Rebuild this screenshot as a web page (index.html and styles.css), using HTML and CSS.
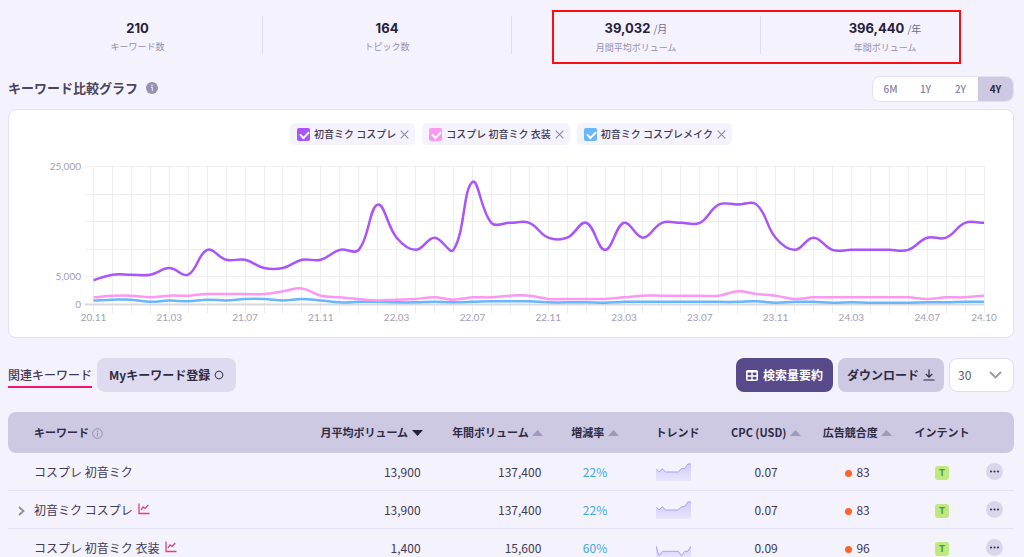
FILE: index.html
```html
<!DOCTYPE html>
<html lang="ja">
<head>
<meta charset="utf-8">
<meta name="viewport" content="width=device-width, initial-scale=1">
<title>キーワード比較グラフ</title>
<link rel="stylesheet" href="styles.css">
</head>
<body>
<svg class="sprite" aria-hidden="true">
  <symbol id="i-close" viewBox="0 0 10 10"><path d="M.8.8l8.400 8.400M9.200.8L.8 9.200" fill="none" stroke="#8f8aa8" stroke-width="1.200"/></symbol>
  <symbol id="i-trend" viewBox="0 0 12 12"><path d="M1 .5V10.500H11.500" fill="none" stroke="#e5407c" stroke-width="1.300"/><path d="M3 6.800L5 4l2 1.500L10.300 2" fill="none" stroke="#e5407c" stroke-width="1.300"/></symbol>
  <symbol id="i-more" viewBox="0 0 17 17"><circle cx="5" cy="8.500" r="1.100"/><circle cx="8.500" cy="8.500" r="1.100"/><circle cx="12" cy="8.500" r="1.100"/></symbol>
  <symbol id="i-up" viewBox="0 0 11 6"><path d="M5.500 0L11 6H0z"/></symbol>
  <symbol id="i-down" viewBox="0 0 11 6"><path d="M0 0h11L5.500 6z"/></symbol>
  <symbol id="spark-a" viewBox="0 0 35 18"><path d="M0 5.700L3.200 9 6.400 5.700 9.500 9H22.300L25.500 5.700H28.600L31.800 1H35V18H0z" fill="url(#fade)"/><path d="M0 5.700L3.200 9 6.400 5.700 9.500 9H22.300L25.500 5.700H28.600L31.800 1H35" fill="none" stroke="#aaa0fb"/></symbol>
  <symbol id="spark-b" viewBox="0 0 35 18"><path d="M0 7L3.200 17 6.400 12.300H22.300L25.500 17 28.600 12.300H31.800L35 7V18H0z" fill="url(#fade)"/><path d="M0 7L3.200 17 6.400 12.300H22.300L25.500 17 28.600 12.300H31.800L35 7" fill="none" stroke="#aaa0fb"/></symbol>
  <defs><linearGradient id="fade" x1="0" y1="0" x2="0" y2="1"><stop offset="0" stop-color="#d1cbfb"/><stop offset="1" stop-color="#e8e5fc"/></linearGradient></defs>
</svg>
<main class="page">
  <section class="stats">
    <div class="stat"><p class="stat-value">210</p><p class="stat-label">キーワード数</p></div>
    <div class="stat"><p class="stat-value">164</p><p class="stat-label">トピック数</p></div>
    <div class="stat"><p class="stat-value">39,032 <span class="unit">/月</span></p><p class="stat-label">月間平均ボリューム</p></div>
    <div class="stat"><p class="stat-value">396,440 <span class="unit">/年</span></p><p class="stat-label">年間ボリューム</p></div>
    <div class="highlight"></div>
  </section>

  <header class="section-head">
    <h1 class="title">キーワード比較グラフ
      <svg class="info" viewBox="0 0 12 12"><circle cx="6" cy="6" r="6" fill="#9792b0"/><path d="M5 5.400H6.300V8.800" fill="none" stroke="#f4f2fc"/><circle cx="6" cy="3.400" r=".8" fill="#f4f2fc"/></svg>
    </h1>
    <div class="range" role="group" aria-label="期間">
      <button type="button">6M</button><button type="button">1Y</button><button type="button">2Y</button><button type="button" class="active" aria-pressed="true">4Y</button>
    </div>
  </header>

  <section class="card">
    <div class="chips">
      <div class="chip"><label><input class="check violet" type="checkbox" checked>初音ミク コスプレ</label><button type="button" aria-label="削除"><svg><use href="#i-close"/></svg></button></div>
      <div class="chip"><label><input class="check pink" type="checkbox" checked>コスプレ 初音ミク 衣装</label><button type="button" aria-label="削除"><svg><use href="#i-close"/></svg></button></div>
      <div class="chip"><label><input class="check blue" type="checkbox" checked>初音ミク コスプレメイク</label><button type="button" aria-label="削除"><svg><use href="#i-close"/></svg></button></div>
    </div>
    <svg class="chart" id="chart" viewBox="0 0 1004 176" role="img" aria-label="検索ボリュームの推移"></svg>
  </section>

  <div class="toolbar">
    <a class="tab" href="#keywords">関連キーワード</a>
    <button type="button" class="btn soft">Myキーワード登録
      <svg class="ring" viewBox="0 0 10 10"><path d="M5 1L7.800 2.200 9 5 7.800 7.800 5 9 2.200 7.800 1 5 2.200 2.200z" fill="none" stroke="currentColor"/></svg>
    </button>
    <div class="actions">
      <button type="button" class="btn primary">
        <svg class="grid-icon" viewBox="0 0 12 11"><rect x=".8" y=".8" width="10.400" height="9.400" rx="1" fill="none" stroke="currentColor" stroke-width="1.600"/><path d="M1 1.800H11M1 6H11M6 2.500V10" stroke="currentColor" stroke-width="1.400"/></svg>
        検索量要約</button>
      <button type="button" class="btn muted">ダウンロード
        <svg class="down-icon" viewBox="0 0 12 12"><path d="M6 .5V8M2.800 5L6 8.200 9.200 5M.5 11H11.500" fill="none" stroke="currentColor" stroke-width="1.200"/></svg>
      </button>
      <div class="select">
        <select aria-label="表示件数"><option>30</option><option>50</option><option>100</option></select>
        <svg viewBox="0 0 13 8"><path d="M1 1l5.500 5.500L12 1" fill="none" stroke="#9a94b5" stroke-width="1.800"/></svg>
      </div>
    </div>
  </div>

  <table class="table" id="keywords">
    <colgroup><col><col class="w-month"><col class="w-year"><col class="w-rate"><col class="w-trend"><col class="w-cpc"><col class="w-comp"><col class="w-intent"><col class="w-menu"></colgroup>
    <thead>
      <tr>
        <th class="left">キーワード <svg class="info-line" viewBox="0 0 12 12"><circle cx="6" cy="6" r="5.300" fill="none" stroke="#8f8aa8"/><path d="M6 5.200V9" stroke="#8f8aa8"/><circle cx="6" cy="3.500" r=".7" fill="#8f8aa8"/></svg></th>
        <th class="right">月平均ボリューム <svg class="sort on"><use href="#i-down"/></svg></th>
        <th class="right">年間ボリューム <svg class="sort"><use href="#i-up"/></svg></th>
        <th>増減率 <svg class="sort"><use href="#i-up"/></svg></th>
        <th>トレンド</th>
        <th>CPC (USD) <svg class="sort"><use href="#i-up"/></svg></th>
        <th>広告競合度 <svg class="sort"><use href="#i-up"/></svg></th>
        <th>インテント</th>
        <th></th>
      </tr>
    </thead>
    <tbody>
      <tr>
        <td class="left">コスプレ 初音ミク</td><td class="right">13,900</td><td class="right">137,400</td><td class="rate">22%</td>
        <td class="trend"><svg class="spark"><use href="#spark-a"/></svg></td><td>0.07</td><td><span class="dot"></span>83</td><td><span class="intent">T</span></td>
        <td class="menu"><button type="button" aria-label="メニュー"><svg><use href="#i-more"/></svg></button></td>
      </tr>
      <tr>
        <td class="left parent"><button type="button" class="expand" aria-label="展開"><svg viewBox="0 0 7 10"><path d="M1 1l4.500 4L1 9" fill="none" stroke="#8f8aa8" stroke-width="1.800"/></svg></button>初音ミク コスプレ <svg class="mark"><use href="#i-trend"/></svg></td><td class="right">13,900</td><td class="right">137,400</td><td class="rate">22%</td>
        <td class="trend"><svg class="spark"><use href="#spark-a"/></svg></td><td>0.07</td><td><span class="dot"></span>83</td><td><span class="intent">T</span></td>
        <td class="menu"><button type="button" aria-label="メニュー"><svg><use href="#i-more"/></svg></button></td>
      </tr>
      <tr>
        <td class="left">コスプレ 初音ミク 衣装 <svg class="mark"><use href="#i-trend"/></svg></td><td class="right">1,400</td><td class="right">15,600</td><td class="rate">60%</td>
        <td class="trend"><svg class="spark"><use href="#spark-b"/></svg></td><td>0.09</td><td><span class="dot"></span>96</td><td><span class="intent">T</span></td>
        <td class="menu"><button type="button" aria-label="メニュー"><svg><use href="#i-more"/></svg></button></td>
      </tr>
    </tbody>
  </table>
</main>
<script src="chart.js"></script>
</body>
</html>
```
FILE: styles.css
```css
* { box-sizing: border-box; }
body {
  margin: 0;
  background: #f4f2fc;
  color: #3f3a55;
  font-family: "Noto Sans CJK JP", sans-serif;
  font-size: 12px;
  line-height: 18px;
}
button, select, input { font: inherit; color: inherit; margin: 0; }
button { border: 0; padding: 0; background: none; cursor: pointer; }
p, h1 { margin: 0; }
svg { flex: none; }
.sprite { position: absolute; width: 0; height: 0; }
.page { padding: 16px 10px 0 8px; }

.stats {
  position: relative;
  display: grid;
  grid-template-columns: repeat(4, 1fr);
  padding: 0 5px;
}
.stat { height: 38px; text-align: center; }
.stat + .stat { border-left: 1px solid #dfdcf2; }
.stat-value {
  font-family: Inter, "Noto Sans CJK JP", sans-serif;
  font-size: 13px;
  font-weight: 700;
  line-height: 24px;
  color: #25213a;
}
.unit { font-family: "Noto Sans CJK JP", sans-serif; font-size: 10px; font-weight: 400; color: #6f6a86; }
.stat-label { font-size: 9px; line-height: 14px; color: #9590ad; }
.highlight {
  position: absolute;
  top: -6px;
  bottom: -10px;
  left: 54.1%;
  right: 5.3%;
  border: 2px solid #fb0d12;
}

.section-head { display: flex; justify-content: space-between; align-items: center; margin: 22px 0 7px; }
.title { display: flex; align-items: center; gap: 8px; height: 26px; padding-bottom: 2px; font-size: 13px; font-weight: 700; color: #4a4560; }
.info { width: 12px; height: 12px; }
.range { display: flex; overflow: hidden; border: 1px solid #e4e1f4; border-radius: 8px; background: #fff; }
.range button { width: 35px; height: 24px; font-size: 10px; font-weight: 500; color: #8580a0; }
.range .active { background: #cdc9e2; color: #2c2842; font-weight: 700; }

.card { padding: 13px 0 6px; border: 1px solid #e4e1f6; border-radius: 8px; background: #fff; }
.chips { display: flex; justify-content: center; gap: 7px; margin-bottom: 10px; }
.chip { display: flex; align-items: center; gap: 4px; height: 22px; padding: 0 6px 0 7px; border-radius: 5px; background: #f4f2fc; }
.chip label { display: flex; align-items: center; gap: 4px; font-size: 10px; font-weight: 500; color: #3f3a55; }
.chip button, .chip button svg { display: block; width: 9px; height: 9px; }
.check { position: relative; appearance: none; width: 13px; height: 13px; border-radius: 2px; }
.check::after {
  content: "";
  position: absolute;
  left: 3px;
  top: 3px;
  width: 7px;
  height: 4px;
  border: solid #fff;
  border-width: 0 0 2px 2px;
  transform: rotate(-45deg);
}
.violet { background: #a955fb; }
.pink { background: #fc97f2; }
.blue { background: #68b6fc; }

.chart { display: block; width: 100%; height: auto; }
.chart text { font-family: Lato, sans-serif; font-size: 10px; fill: #a29db9; }
.chart .grid { stroke: #eeedf2; fill: none; }
.chart .base { stroke: #d9d8dd; stroke-width: 2; }
.chart .line { fill: none; stroke-width: 2.5px; }
.line-violet { stroke: #a955fb; }
.line-pink { stroke: #fc97f2; }
.line-blue { stroke: #68b6fc; }

.toolbar { display: flex; align-items: center; margin: 20px 0; }
.tab { margin-right: 5px; padding: 4px 0 2px; border-bottom: 2px solid #ee1a66; font-weight: 500; color: #3f3a55; text-decoration: none; }
.btn { display: flex; align-items: center; gap: 4px; height: 34px; border-radius: 8px; font-weight: 700; color: #2f2b45; white-space: nowrap; }
.soft { padding: 0 12px; background: #dedbf1; }
.primary { padding: 0 10px; background: #574a8a; color: #fff; gap: 5px; }
.muted { padding: 0 9px; background: #cdc9e2; }
.ring { width: 10px; height: 10px; }
.grid-icon { width: 12px; height: 11px; }
.down-icon { width: 12px; height: 12px; }
.actions { display: flex; gap: 5px; margin-left: auto; }
.select { position: relative; width: 65px; }
.select select { appearance: none; width: 100%; height: 34px; padding: 0 8px; border: 1px solid #dfdcf2; border-radius: 8px; background: #fff; color: #5e5975; }
.select svg { position: absolute; right: 12px; top: 13px; width: 13px; height: 8px; pointer-events: none; }

.table { width: 100%; table-layout: fixed; border-collapse: separate; border-spacing: 0; }
.w-month { width: 13.1%; }
.w-year { width: 12%; }
.w-rate { width: 8.5%; }
.w-trend { width: 7.9%; }
.w-cpc { width: 9.7%; }
.w-comp { width: 8.5%; }
.w-intent { width: 8.3%; }
.w-menu { width: 3%; }
.table th { height: 41px; padding: 0 0 2px; background: #cdc9e2; font-size: 11px; font-weight: 700; color: #2f2b45; white-space: nowrap; }
.table th:first-child { border-radius: 8px 0 0 8px; }
.table th:last-child { border-radius: 0 8px 8px 0; }
.table td { height: 38px; padding: 0; border-bottom: 1px solid #e6e3f6; text-align: center; white-space: nowrap; }
.table .left { padding-left: 26px; text-align: left; }
.table .right { text-align: right; }
.table th.right { padding-right: 9px; }
.table td.right { padding-right: 11px; }
.table .rate { color: #46a9e4; }
.table .trend { padding-left: 18px; text-align: left; }
.table .parent { padding-left: 9px; }
.table .menu { padding-left: 2px; text-align: left; }
.info-line { width: 11px; height: 11px; vertical-align: -2px; }
.sort { width: 11px; height: 6px; margin-left: 1px; vertical-align: 1px; fill: #9f9ab8; }
.sort.on { fill: #25213a; }
.spark { display: block; width: 35px; height: 18px; }
.mark { width: 12px; height: 12px; margin-left: 3px; vertical-align: 0; }
.expand { width: 17px; text-align: left; }
.expand svg { display: block; width: 7px; height: 10px; margin-left: 1px; }
.parent .expand { vertical-align: -1px; }
.dot { display: inline-block; width: 7px; height: 7px; margin-right: 4px; border-radius: 50%; background: #ff622c; }
.intent { display: inline-block; width: 14px; height: 14px; border-radius: 3px; background: #bfe97e; color: #3a9d3c; font-family: Inter, sans-serif; font-size: 9px; font-weight: 700; line-height: 14px; vertical-align: middle; }
.menu button { display: block; width: 17px; height: 17px; border-radius: 50%; background: #d9d6eb; }
.menu svg { display: block; width: 17px; height: 17px; fill: #3f3a55; }
```
FILE: chart.js
```js
const svg = document.getElementById("chart");
const left = 84.5, right = 975, top0 = 11.5, bottom = 149.5, max = 25000;
const series = {
  blue: [720,880,880,480,720,590,880,720,1000,1000,720,1000,720,390,480,480,390,390,480,390,480,590,590,590,390,390,390,320,480,480,480,480,480,480,480,590,320,480,480,320,390,320,320,320,390,390,480,480],
  pink: [1300,1600,1600,1300,1600,1600,1900,1900,1900,1900,2400,2900,1600,1300,1000,720,880,1000,1300,880,1300,1300,1600,1600,1000,1000,1000,1000,1300,1600,1600,1600,1600,1600,2400,1900,1600,1000,1300,1300,1300,1300,1300,1300,1000,1300,1300,1600],
  violet: [4400,5400,5400,5400,6600,5400,9900,8100,8100,6600,6600,8100,8100,9900,9900,18100,12100,9900,12100,9900,22200,14800,14800,14800,12100,12100,14800,9900,14800,12100,14800,14800,14800,18100,18100,18100,12100,9900,12100,9900,9900,9900,9900,9900,12100,12100,14800,14800]
};
const count = series.violet.length;
const px = i => left + (right - left) * i / (count - 1);
const py = v => bottom - (bottom - top0) * v / max;

function add(name, attrs, text) {
  const el = document.createElementNS("http://www.w3.org/2000/svg", name);
  for (const key in attrs) el.setAttribute(key, attrs[key]);
  if (text) el.textContent = text;
  svg.appendChild(el);
}

// Cubic spline whose handles are weighted by the distance to each neighbour.
function spline(values) {
  const p = values.map((v, i) => [px(i), py(v)]);
  const handles = p.map((c, i) => {
    const a = p[Math.max(i - 1, 0)], b = p[Math.min(i + 1, p.length - 1)];
    const d1 = Math.hypot(c[0] - a[0], c[1] - a[1]), d2 = Math.hypot(b[0] - c[0], b[1] - c[1]);
    const f1 = 0.4 * d1 / (d1 + d2), f2 = 0.4 * d2 / (d1 + d2);
    const dx = b[0] - a[0], dy = b[1] - a[1];
    return [[c[0] - f1 * dx, c[1] - f1 * dy], [c[0] + f2 * dx, c[1] + f2 * dy]];
  });
  let d = "M" + p[0];
  for (let i = 1; i < p.length; i++) d += "C" + handles[i - 1][1] + " " + handles[i][0] + " " + p[i];
  return d;
}

for (let i = 0; i < count; i++) {
  const x = Math.floor(px(i)) + 0.5;
  add("path", { class: "grid", d: `M${x} 11V158` });
}
for (let v = 5000; v <= max; v += 5000) {
  const y = Math.floor(py(v)) + 0.5;
  add("path", { class: "grid", d: `M76 ${y}H${right}` });
}
add("path", { class: "base", d: `M76 ${bottom}H${right}` });
for (const v of [0, 5000, 25000]) {
  add("text", { x: 72, y: py(v) + 3, "text-anchor": "end" }, v.toLocaleString("en-US"));
}
const months = ["20.11","21.03","21.07","21.11","22.03","22.07","22.11","23.03","23.07","23.11","24.03","24.07"];
months.forEach((m, i) => add("text", { x: px(i * 4), y: 166, "text-anchor": "middle" }, m));
add("text", { x: right, y: 166, "text-anchor": "middle" }, "24.10");
for (const name in series) add("path", { class: "line line-" + name, d: spline(series[name]) });
```
